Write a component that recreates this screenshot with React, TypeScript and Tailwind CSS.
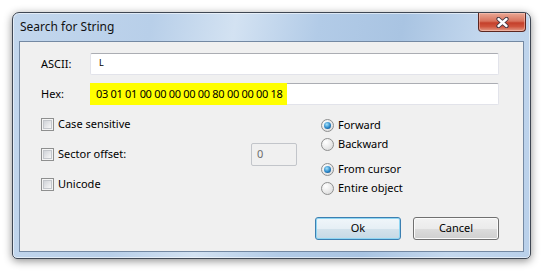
import React from 'react';

function CheckBox({ label }: { label: string }) {
  return (
    <div className="flex items-center gap-[4px]">
      <span className="box-border w-[13px] h-[13px] border border-[#8e8f8f] bg-[#f4f4f4] p-[1px]">
        <span className="block w-full h-full border border-[#c3c6cb] bg-[linear-gradient(135deg,#d0d3d8,#f7f7f7)]" />
      </span>
      <span>{label}</span>
    </div>
  );
}

function Radio({ label, checked }: { label: string; checked?: boolean }) {
  return (
    <div className="flex items-center gap-[4px] h-[19px]">
      <span className="box-border w-[13px] h-[13px] rounded-full border border-[#8e8f8f] bg-[radial-gradient(circle_at_35%_30%,#ffffff,#d6d6d6)] flex items-center justify-center">
        {checked && (
          <span className="block w-[7px] h-[7px] rounded-full bg-[radial-gradient(circle_at_40%_35%,#a6e4fb,#2a86c8_55%,#0b3a6a)]" />
        )}
      </span>
      <span>{label}</span>
    </div>
  );
}

function Button({ label, focused }: { label: string; focused?: boolean }) {
  return (
    <div
      className={
        focused
          ? 'w-[86px] h-[23px] rounded-[3px] border border-[#3c7fb1] bg-[linear-gradient(#f0f6fa_0%,#e6eff5_50%,#d4e3ec_50%,#c6d9e5_100%)] shadow-[inset_0_0_0_1px_#8fd6f3] flex items-center justify-center'
          : 'w-[86px] h-[23px] rounded-[3px] border border-[#707070] bg-[linear-gradient(#f2f2f2_0%,#ebebeb_50%,#dddddd_50%,#cfcfcf_100%)] shadow-[inset_0_0_0_1px_#fbfbfb] flex items-center justify-center'
      }
    >
      {label}
    </div>
  );
}

export default function App() {
  return (
    <div className="w-[544px] h-[271px] bg-white pt-[12px] pl-[12px] font-['Noto_Sans','DejaVu_Sans',sans-serif] text-[11px] text-black">
      {/* window frame */}
      <div className="w-[519px] h-[247px] rounded-t-[7px] rounded-b-[5px] border border-[#3f4753] bg-[linear-gradient(100deg,#c3d7ed_0%,#b8cfe9_25%,#d3e2f2_40%,#b2cbe7_55%,#a9c4e2_70%,#c4d8ee_85%,#b9d0ea_100%)] shadow-[0_2px_9px_rgba(0,0,0,0.45),inset_0_0_0_1px_rgba(255,255,255,0.55)] flex flex-col">
        {/* title bar */}
        <div className="h-[28px] flex items-start justify-between">
          <span className="pl-[7px] pt-[5px] text-[12px] text-[#111111]">Search for String</span>
          <div className="mr-[4px] w-[48px] h-[19px] rounded-b-[4px] border border-t-0 border-[#5b2620] bg-[linear-gradient(#e9a895_0%,#d8735d_45%,#c4402b_55%,#cf543d_75%,#e39c88_100%)] shadow-[inset_0_0_0_1px_rgba(255,210,200,0.45)] flex items-center justify-center">
            <svg width="15" height="11" viewBox="0 0 15 11">
              <path d="M3.5 2 L11.5 9 M11.5 2 L3.5 9" stroke="#3a3340" strokeWidth="4.2" strokeLinecap="round" />
              <path d="M3.5 2 L11.5 9 M11.5 2 L3.5 9" stroke="#ffffff" strokeWidth="2.4" strokeLinecap="round" />
            </svg>
          </div>
        </div>
        {/* client area */}
        <div className="mx-[6px] h-[211px] border border-[#7489a3] bg-[#f0f0f0] pt-[11px] pl-[21px] pr-[24px] flex flex-col">
          <div className="flex h-[22px] items-center">
            <span className="w-[49px]">ASCII:</span>
            <div className="flex-1 h-[22px] rounded-[2px] border border-[#e2e3ea] border-t-[#abadb3] bg-white pl-[8px] pt-[3px] text-[9px] leading-[12px]">
              L
            </div>
          </div>
          <div className="mt-[8px] flex h-[22px] items-center">
            <span className="w-[49px]">Hex:</span>
            <div className="flex-1 h-[22px] rounded-[2px] border border-[#e2e3ea] border-t-[#abadb3] bg-white flex">
              <span className="-mt-px -ml-px h-[22px] bg-[#ffff00] pl-[6px] pr-[4px] flex items-center tracking-[-0.3px]">
                03 01 01 00 00 00 00 00 80 00 00 00 18
              </span>
            </div>
          </div>

          <div className="mt-[8px] flex items-start">
            <div className="w-[256px] flex flex-col gap-[7px]">
              <div className="h-[23px] flex items-center">
                <CheckBox label="Case sensitive" />
              </div>
              <div className="h-[23px] flex items-center justify-between">
                <CheckBox label="Sector offset:" />
                <div className="w-[46px] h-[23px] rounded-[2px] border border-[#c2c5ca] bg-[#f0f0f0] pl-[5px] flex items-center text-[#6d6d6d]">
                  0
                </div>
              </div>
              <div className="h-[23px] flex items-center">
                <CheckBox label="Unicode" />
              </div>
            </div>
            <div className="ml-[24px] mt-[3px] flex flex-col">
              <Radio label="Forward" checked />
              <Radio label="Backward" />
              <div className="mt-[6px]">
                <Radio label="From cursor" checked />
                <Radio label="Entire object" />
              </div>
            </div>
          </div>

          <div className="mt-[19px] flex justify-end gap-[12px]">
            <Button label="Ok" focused />
            <Button label="Cancel" />
          </div>
        </div>
      </div>
    </div>
  );
}
